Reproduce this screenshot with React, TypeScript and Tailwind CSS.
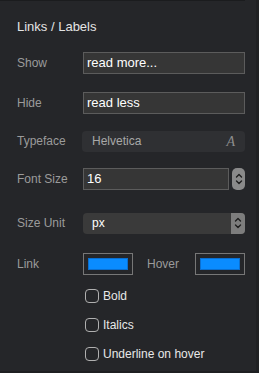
import React from "react";

const Chev = ({ className = "" }: { className?: string }) => (
  <svg width="8" height="14" viewBox="0 0 8 14" className={className}>
    <path d="M1.5 5 L4 2.5 L6.5 5" fill="none" stroke="#1e1e1e" strokeWidth="1.4" strokeLinecap="round" strokeLinejoin="round" />
    <path d="M1.5 9 L4 11.5 L6.5 9" fill="none" stroke="#1e1e1e" strokeWidth="1.4" strokeLinecap="round" strokeLinejoin="round" />
  </svg>
);

const Label = ({ children }: { children: React.ReactNode }) => (
  <div className="w-[66px] shrink-0 text-[12px] text-[#9b9b9b]">{children}</div>
);

const Check = ({ label }: { label: string }) => (
  <div className="flex items-center gap-[4px] pl-[85px] h-[14px]">
    <div className="w-[14px] h-[14px] rounded-[4px] border border-[#b0b0b0] bg-[#252629]" />
    <span className="text-[12px] text-[#e8e8e8]">{label}</span>
  </div>
);

export default function App() {
  return (
    <div
      className="w-[259px] h-[373px] bg-[#252629] relative overflow-hidden"
      style={{ fontFamily: "'Liberation Sans', Arial, sans-serif" }}
    >
      <div className="absolute top-0 left-0 w-[245px] h-[1px] bg-[#1b1c1e]" />
      <div className="absolute top-0 right-0 w-[3px] h-full bg-[#202123]" />
      <div className="absolute bottom-0 left-0 w-full h-[2px] bg-[#1e1f21]" />
      <div className="pl-[17px] pr-[14px]">
        <div className="pt-[18px] text-[13px] text-[#e4e4e4] leading-[18px]">Links / Labels</div>
        <div className="flex items-center mt-[16px] h-[22px]">
          <Label>Show</Label>
          <div className="flex-1 h-[22px] bg-[#363636] border border-[#5c5c5c] flex items-center px-[3px] text-[13px] text-white">read more...</div>
        </div>
        <div className="flex items-center mt-[18px] h-[22px]">
          <Label>Hide</Label>
          <div className="flex-1 h-[22px] bg-[#363636] border border-[#5c5c5c] flex items-center px-[3px] text-[13px] text-white">read less</div>
        </div>
        <div className="flex items-center mt-[16px] h-[22px]">
          <Label>Typeface</Label>
          <div className="flex-1 h-[21px] -ml-[1px] bg-[#2f3033] rounded-[4px] flex items-center justify-between pl-[10px] pr-[10px] text-[12px] text-[#a8a8a8]">
            <span>Helvetica</span>
            <span className="text-[#8d8d8d] text-[14px] italic" style={{ fontFamily: "'Liberation Serif', serif" }}>A</span>
          </div>
        </div>
        <div className="flex items-center mt-[16px] h-[22px]">
          <Label>Font Size</Label>
          <div className="flex-1 h-[22px] bg-[#363636] border border-[#5c5c5c] flex items-center px-[3px] text-[13px] text-white">16</div>
          <div className="ml-[3px] w-[13px] h-[22px] rounded-[5px] bg-[#8a8a8a] flex items-center justify-center">
            <Chev />
          </div>
        </div>
        <div className="flex items-center mt-[22px] h-[22px]">
          <Label>Size Unit</Label>
          <div className="flex-1 h-[21px] bg-[#3a3a3a] rounded-[4px] flex items-center justify-between overflow-hidden">
            <span className="pl-[9px] text-[12px] text-white">px</span>
            <div className="w-[14px] h-full bg-[#7d7d7d] flex items-center justify-center">
              <Chev />
            </div>
          </div>
        </div>
        <div className="flex items-center mt-[19px] h-[22px]">
          <Label>Link</Label>
          <div className="w-[50px] h-[22px] border border-[#777] flex items-center justify-center">
            <div className="w-[40px] h-[12px] bg-[#0a8cff] border border-[#0b6fd0]" />
          </div>
          <div className="ml-[14px] w-[48px] text-[12px] text-[#9b9b9b]">Hover</div>
          <div className="w-[50px] h-[22px] border border-[#777] flex items-center justify-center">
            <div className="w-[40px] h-[12px] bg-[#0a8cff] border border-[#0b6fd0]" />
          </div>
        </div>
      </div>
      <div className="mt-[14px] flex flex-col gap-[15px]">
        <Check label="Bold" />
        <Check label="Italics" />
        <Check label="Underline on hover" />
      </div>
    </div>
  );
}
